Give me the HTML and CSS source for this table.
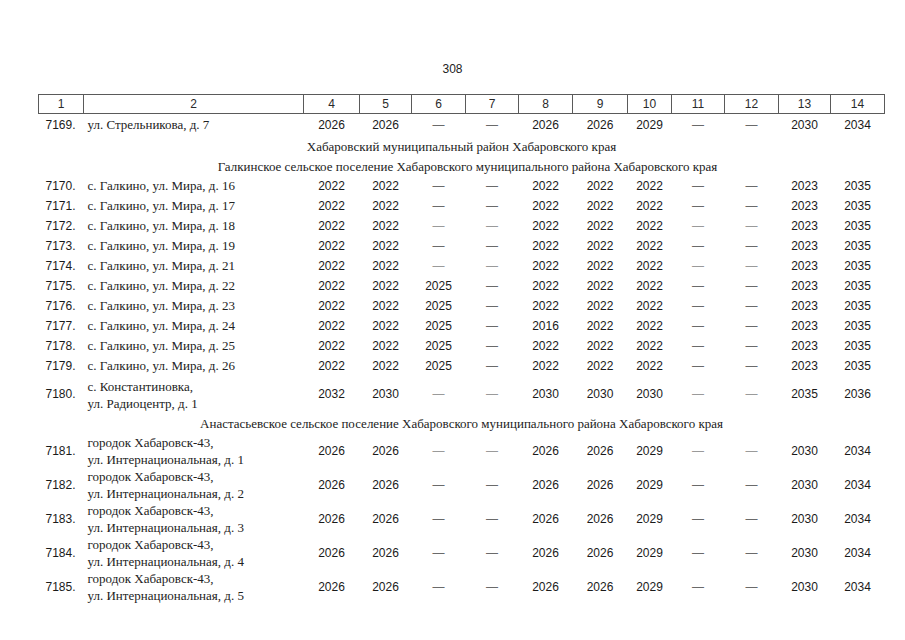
FILE: index.html
```html
<!DOCTYPE html>
<html lang="ru">
<head>
<meta charset="utf-8">
<link rel="stylesheet" href="styles.css">
</head>
<body>
<div class="page-num">308</div>
<table class="grid">
<colgroup>
<col class="c1"><col class="c2"><col class="c4"><col class="c5"><col class="c6"><col class="c7"><col class="c8"><col class="c9"><col class="c10"><col class="c11"><col class="c12"><col class="c13"><col class="c14">
</colgroup>
<thead>
<tr class="head"><th>1</th><th>2</th><th>4</th><th>5</th><th>6</th><th>7</th><th>8</th><th>9</th><th>10</th><th>11</th><th>12</th><th>13</th><th>14</th></tr>
</thead>
<tbody>
<tr class="r first"><td class="no">7169.</td><td class="addr">ул. Стрельникова, д. 7</td><td>2026</td><td>2026</td><td class="d">—</td><td class="d">—</td><td>2026</td><td>2026</td><td>2029</td><td class="d">—</td><td class="d">—</td><td>2030</td><td>2034</td></tr>
<tr class="sec s1"><td colspan="13">Хабаровский муниципальный район Хабаровского края</td></tr>
<tr class="sec s2"><td colspan="13">Галкинское сельское поселение Хабаровского муниципального района Хабаровского края</td></tr>
<tr class="r"><td class="no">7170.</td><td class="addr">с. Галкино, ул. Мира, д. 16</td><td>2022</td><td>2022</td><td class="d">—</td><td class="d">—</td><td>2022</td><td>2022</td><td>2022</td><td class="d">—</td><td class="d">—</td><td>2023</td><td>2035</td></tr>
<tr class="r"><td class="no">7171.</td><td class="addr">с. Галкино, ул. Мира, д. 17</td><td>2022</td><td>2022</td><td class="d">—</td><td class="d">—</td><td>2022</td><td>2022</td><td>2022</td><td class="d">—</td><td class="d">—</td><td>2023</td><td>2035</td></tr>
<tr class="r"><td class="no">7172.</td><td class="addr">с. Галкино, ул. Мира, д. 18</td><td>2022</td><td>2022</td><td class="d lt">—</td><td class="d lt">—</td><td>2022</td><td>2022</td><td>2022</td><td class="d lt">—</td><td class="d lt">—</td><td>2023</td><td>2035</td></tr>
<tr class="r"><td class="no">7173.</td><td class="addr">с. Галкино, ул. Мира, д. 19</td><td>2022</td><td>2022</td><td class="d">—</td><td class="d">—</td><td>2022</td><td>2022</td><td>2022</td><td class="d">—</td><td class="d">—</td><td>2023</td><td>2035</td></tr>
<tr class="r"><td class="no">7174.</td><td class="addr">с. Галкино, ул. Мира, д. 21</td><td>2022</td><td>2022</td><td class="d lt">—</td><td class="d lt">—</td><td>2022</td><td>2022</td><td>2022</td><td class="d lt">—</td><td class="d lt">—</td><td>2023</td><td>2035</td></tr>
<tr class="r"><td class="no">7175.</td><td class="addr">с. Галкино, ул. Мира, д. 22</td><td>2022</td><td>2022</td><td>2025</td><td class="d">—</td><td>2022</td><td>2022</td><td>2022</td><td class="d">—</td><td class="d">—</td><td>2023</td><td>2035</td></tr>
<tr class="r"><td class="no">7176.</td><td class="addr">с. Галкино, ул. Мира, д. 23</td><td>2022</td><td>2022</td><td>2025</td><td class="d">—</td><td>2022</td><td>2022</td><td>2022</td><td class="d">—</td><td class="d">—</td><td>2023</td><td>2035</td></tr>
<tr class="r"><td class="no">7177.</td><td class="addr">с. Галкино, ул. Мира, д. 24</td><td>2022</td><td>2022</td><td>2025</td><td class="d">—</td><td>2016</td><td>2022</td><td>2022</td><td class="d">—</td><td class="d">—</td><td>2023</td><td>2035</td></tr>
<tr class="r"><td class="no">7178.</td><td class="addr">с. Галкино, ул. Мира, д. 25</td><td>2022</td><td>2022</td><td>2025</td><td class="d">—</td><td>2022</td><td>2022</td><td>2022</td><td class="d">—</td><td class="d">—</td><td>2023</td><td>2035</td></tr>
<tr class="r"><td class="no">7179.</td><td class="addr">с. Галкино, ул. Мира, д. 26</td><td>2022</td><td>2022</td><td>2025</td><td class="d">—</td><td>2022</td><td>2022</td><td>2022</td><td class="d">—</td><td class="d">—</td><td>2023</td><td>2035</td></tr>
<tr class="r2 tall"><td class="no">7180.</td><td class="addr">с. Константиновка,<br>ул. Радиоцентр, д. 1</td><td>2032</td><td>2030</td><td class="d lt">—</td><td class="d lt">—</td><td>2030</td><td>2030</td><td>2030</td><td class="d lt">—</td><td class="d lt">—</td><td>2035</td><td>2036</td></tr>
<tr class="sec s3"><td colspan="13">Анастасьевское сельское поселение Хабаровского муниципального района Хабаровского края</td></tr>
<tr class="r2"><td class="no">7181.</td><td class="addr">городок Хабаровск-43,<br>ул. Интернациональная, д. 1</td><td>2026</td><td>2026</td><td class="d lt">—</td><td class="d lt">—</td><td>2026</td><td>2026</td><td>2029</td><td class="d lt">—</td><td class="d lt">—</td><td>2030</td><td>2034</td></tr>
<tr class="r2"><td class="no">7182.</td><td class="addr">городок Хабаровск-43,<br>ул. Интернациональная, д. 2</td><td>2026</td><td>2026</td><td class="d">—</td><td class="d">—</td><td>2026</td><td>2026</td><td>2029</td><td class="d">—</td><td class="d">—</td><td>2030</td><td>2034</td></tr>
<tr class="r2"><td class="no">7183.</td><td class="addr">городок Хабаровск-43,<br>ул. Интернациональная, д. 3</td><td>2026</td><td>2026</td><td class="d">—</td><td class="d">—</td><td>2026</td><td>2026</td><td>2029</td><td class="d">—</td><td class="d">—</td><td>2030</td><td>2034</td></tr>
<tr class="r2"><td class="no">7184.</td><td class="addr">городок Хабаровск-43,<br>ул. Интернациональная, д. 4</td><td>2026</td><td>2026</td><td class="d">—</td><td class="d">—</td><td>2026</td><td>2026</td><td>2029</td><td class="d">—</td><td class="d">—</td><td>2030</td><td>2034</td></tr>
<tr class="r2"><td class="no">7185.</td><td class="addr">городок Хабаровск-43,<br>ул. Интернациональная, д. 5</td><td>2026</td><td>2026</td><td class="d">—</td><td class="d">—</td><td>2026</td><td>2026</td><td>2029</td><td class="d">—</td><td class="d">—</td><td>2030</td><td>2034</td></tr>
</tbody>
</table>
</body>
</html>
```
FILE: styles.css
```css
html, body {
  margin: 0;
  padding: 0;
  background: #fff;
}
body {
  font-family: "Liberation Sans", Arial, sans-serif;
  font-size: 12px;
  color: #1a1a1a;
}
.page-num {
  margin-top: 61px;
  height: 16px;
  line-height: 16px;
  text-align: center;
  font-size: 12px;
  color: #222;
}
.grid {
  margin: 17px 0 0 38px;
  width: 846px;
  border-collapse: collapse;
  table-layout: fixed;
}
.c1 { width: 45px; }
.c2 { width: 220px; }
.c4 { width: 56px; }
.c5 { width: 52px; }
.c6 { width: 54px; }
.c7 { width: 53px; }
.c8 { width: 54px; }
.c9 { width: 55px; }
.c10 { width: 44px; }
.c11 { width: 53px; }
.c12 { width: 54px; }
.c13 { width: 52px; }
.c14 { width: 54px; }
.head th {
  height: 18px;
  padding: 0;
  border: 1px solid #5a5a5a;
  font-weight: normal;
  text-align: center;
  color: #2a2a2a;
  font-size: 12px;
  line-height: 18px;
}
.grid td {
  padding: 0;
  text-align: center;
  vertical-align: middle;
  white-space: nowrap;
}
.r td { height: 20px; line-height: 16px; }
.r.first td { height: 22px; }
.r2 td { height: 34px; line-height: 17px; }
.r2.tall td { height: 37px; }
.grid td.no {
  text-align: left;
  padding-left: 7px;
}
.grid td.addr {
  text-align: left;
  padding-left: 4px;
  font-family: "Liberation Serif", "Times New Roman", serif;
  font-size: 13px;
  color: #222;
}
.grid td.d { color: #6a6a6a; }
.grid td.d.lt { color: #9a9a9a; }
.sec td {
  font-family: "Liberation Serif", "Times New Roman", serif;
  font-size: 13px;
  color: #222;
  line-height: 16px;
}
.s1 td { height: 21px; }
.s2 td { height: 19px; padding-left: 12px; }
.s3 td { height: 21px; }
```
